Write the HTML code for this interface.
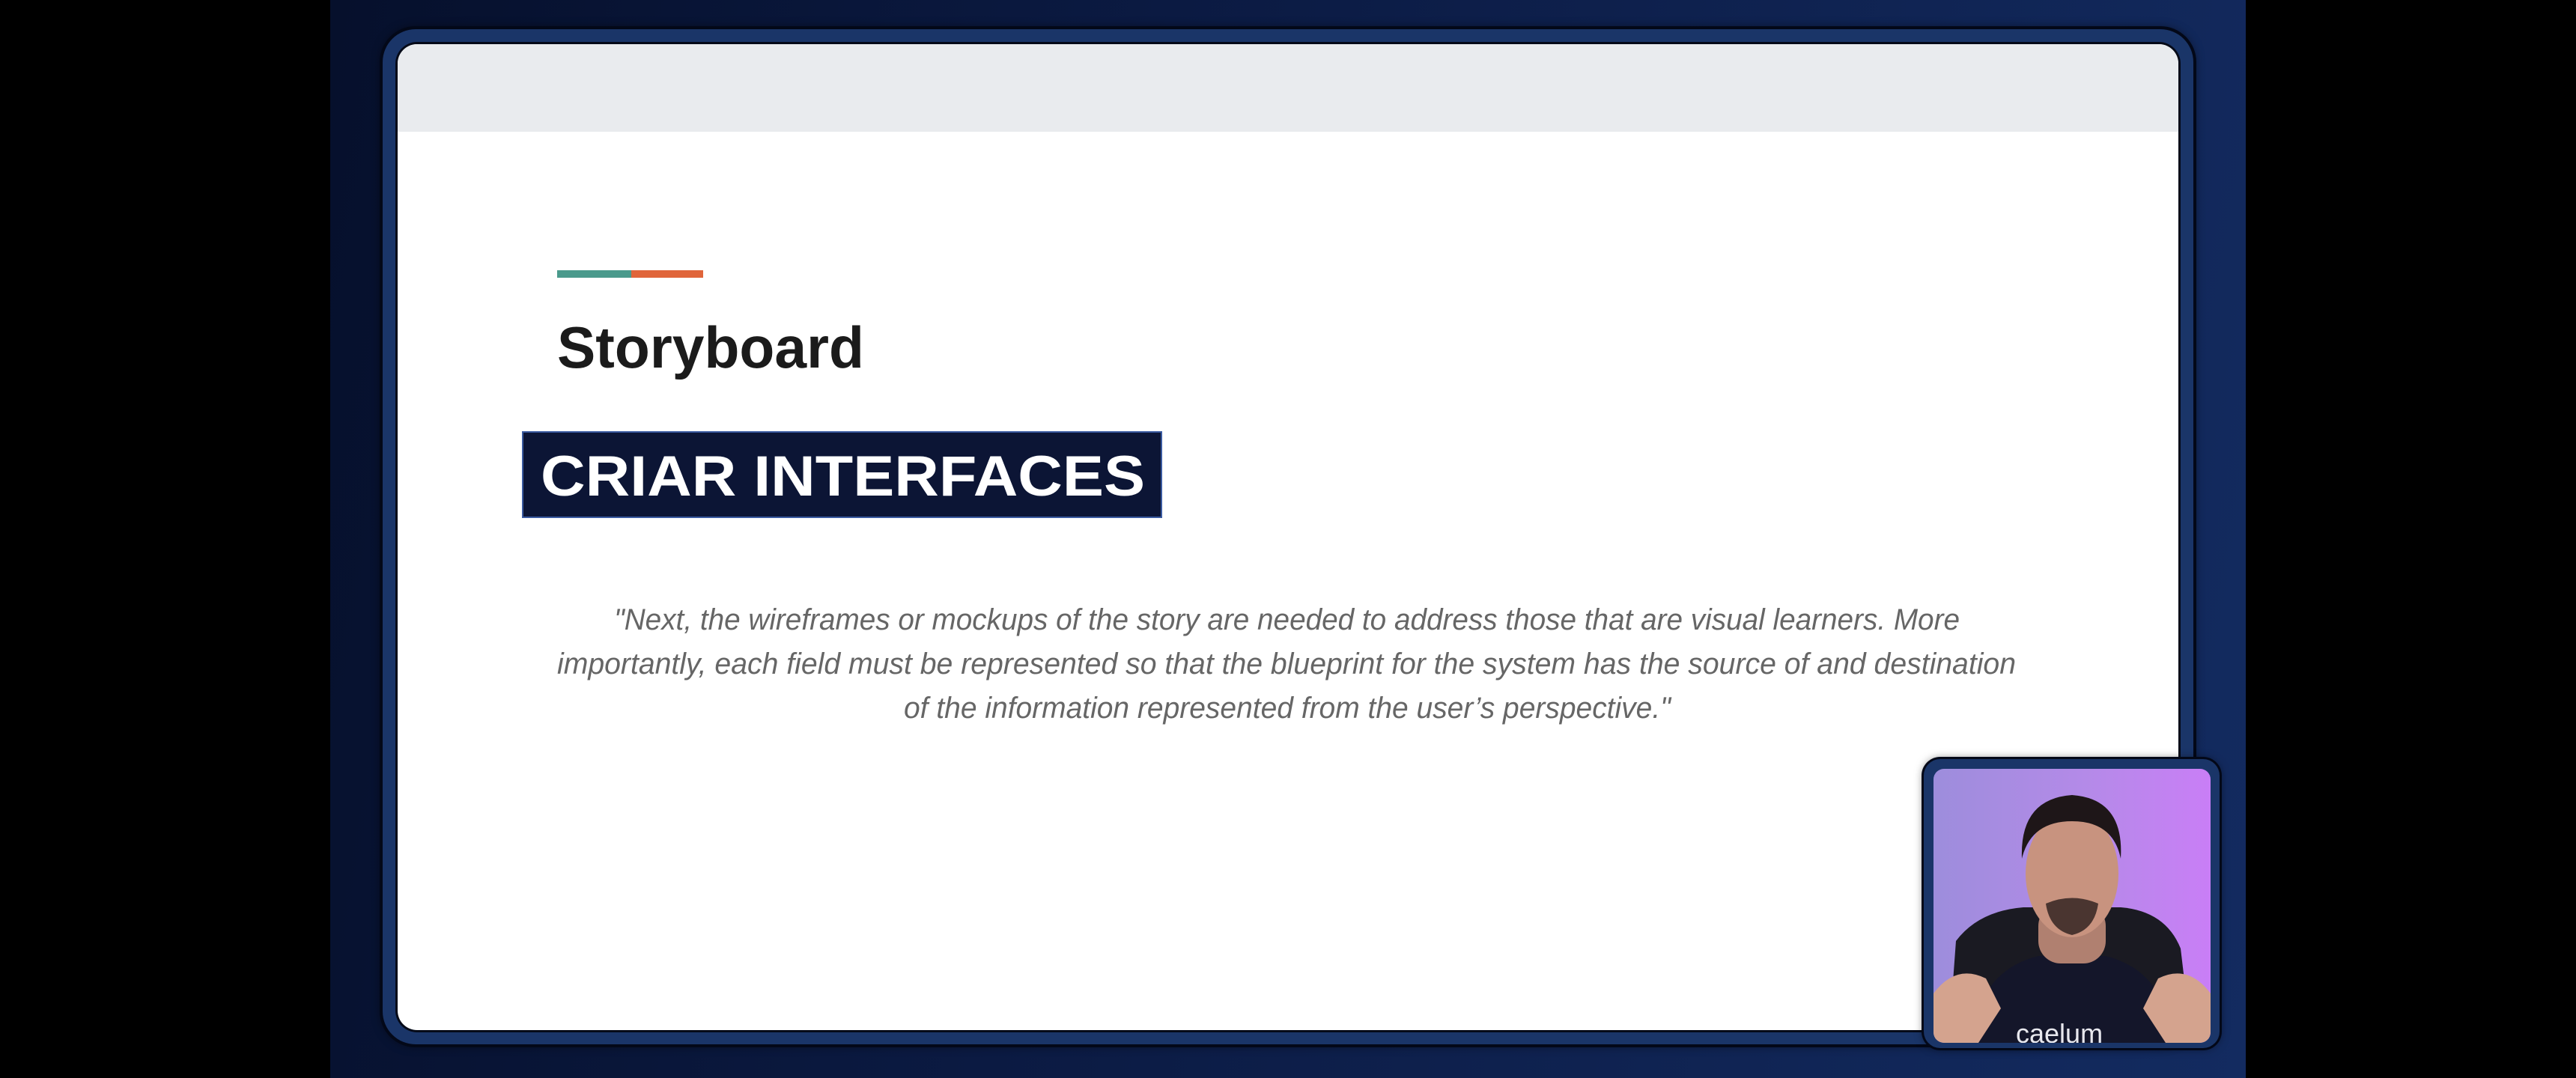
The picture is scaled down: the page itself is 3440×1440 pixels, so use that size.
<!DOCTYPE html>
<html><head><meta charset="utf-8"><style>
html,body{margin:0;padding:0;background:#000;width:3440px;height:1440px;overflow:hidden}
.bg{position:absolute;left:441px;top:0;width:2558px;height:1440px;background:linear-gradient(100deg,#06102c 0%,#0b1a42 40%,#132b60 100%)}
.frame{position:absolute;left:511px;top:39px;width:2418px;height:1356px;border-radius:44px;background:#1a3568;box-shadow:0 0 0 4px #030818,0 0 14px rgba(0,0,0,.7)}
.slide{position:absolute;left:531px;top:59px;width:2378px;height:1317px;border-radius:26px;background:#fff;overflow:hidden;box-shadow:0 0 0 3px #050a18}
.hdr{position:absolute;left:0;top:0;width:100%;height:117px;background:#e9ebee}
svg{position:absolute;left:0;top:0}
.cam{position:absolute;left:2569px;top:1014px;width:395px;height:386px;border-radius:22px;background:#1a3568;box-shadow:0 0 0 3px #030818,0 0 12px rgba(0,0,0,.6)}
.camin{position:absolute;left:13px;top:13px;width:370px;height:366px;border-radius:14px;overflow:hidden;background:linear-gradient(90deg,#9d8ddc 0%,#b48ae8 55%,#c97ef6 100%)}
</style></head><body>
<div class="bg"></div>
<div class="frame"></div>
<div class="slide"><div class="hdr"></div></div>
<svg width="3440" height="1440" viewBox="0 0 3440 1440">
<rect x="744" y="361" width="99" height="10" fill="#4a9a8c"/>
<rect x="843" y="361" width="96" height="10" fill="#e0653a"/>
<text x="744" y="491" font-family="Liberation Sans, sans-serif" font-weight="bold" font-size="78" fill="#1b1b1b" textLength="410" lengthAdjust="spacingAndGlyphs">Storyboard</text>
<rect x="698" y="577" width="853" height="114" fill="#0c1535" stroke="#3a5aa0" stroke-width="2"/>
<text x="722" y="662" font-family="Liberation Sans, sans-serif" font-weight="bold" font-size="76" fill="#fff" textLength="807" lengthAdjust="spacingAndGlyphs">CRIAR INTERFACES</text>
<g font-family="Liberation Sans, sans-serif" font-style="italic" font-size="40" fill="#666">
<text x="820" y="841" textLength="1797" lengthAdjust="spacingAndGlyphs">"Next, the wireframes or mockups of the story are needed to address those that are visual learners. More</text>
<text x="744" y="900" textLength="1948" lengthAdjust="spacingAndGlyphs">importantly, each field must be represented so that the blueprint for the system has the source of and destination</text>
<text x="1207" y="959" textLength="1024" lengthAdjust="spacingAndGlyphs">of the information represented from the user’s perspective."</text>
</g>
</svg>
<div class="cam"><div class="camin">
<svg width="370" height="366" viewBox="0 0 370 366">
<path d="M20 366 L30 230 Q60 190 120 185 L250 185 Q310 190 330 240 L345 366 Z" fill="#1a1a22"/>
<path d="M50 366 Q60 270 140 250 L230 250 Q310 270 320 366 Z" fill="#14162a"/>
<rect x="140" y="180" width="90" height="80" rx="30" fill="#b08070"/>
<ellipse cx="185" cy="140" rx="62" ry="85" fill="#c8937f"/>
<path d="M118 120 Q115 40 185 35 Q255 40 250 120 Q240 70 185 70 Q130 70 118 120 Z" fill="#1e1618"/>
<path d="M150 180 Q185 165 220 180 Q215 215 185 222 Q155 215 150 180 Z" fill="#4a3530"/>
<path d="M0 300 Q30 260 70 280 L90 320 L60 366 L0 366 Z" fill="#d4a38e"/>
<path d="M370 300 Q340 260 300 280 L280 320 L310 366 L370 366 Z" fill="#d4a38e"/>
<text x="110" y="366" font-family="Liberation Sans, sans-serif" font-size="36" fill="#e8e8ee">caelum</text>
</svg>
</div></div>
</body></html>
